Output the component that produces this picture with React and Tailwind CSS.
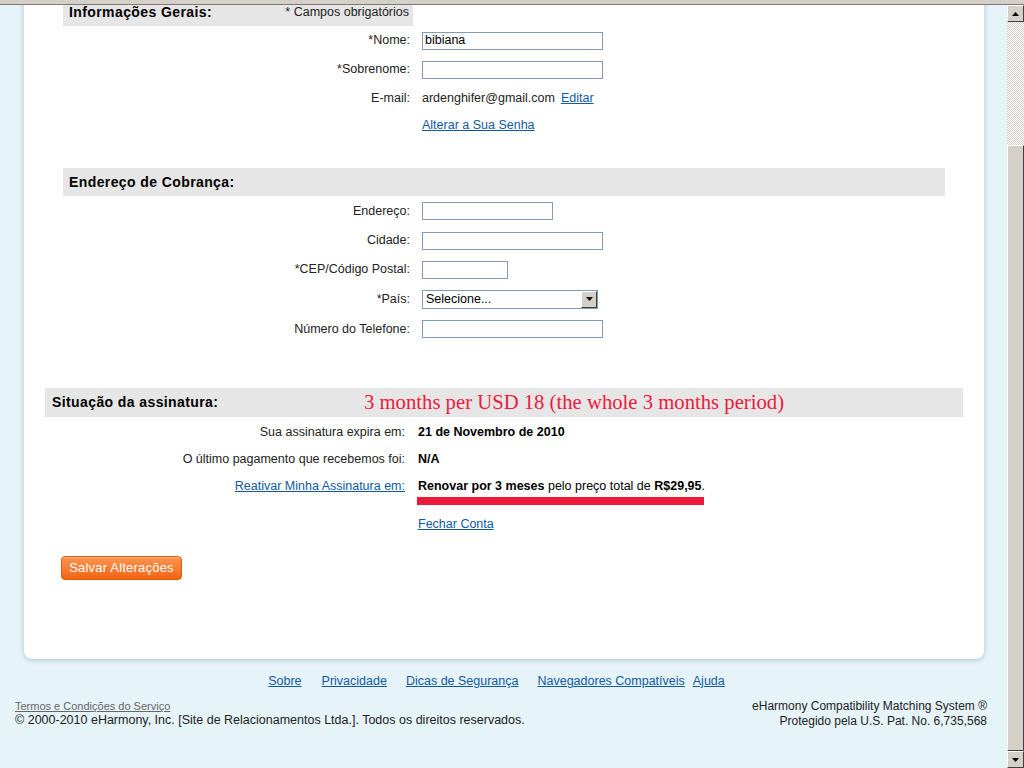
import { useState } from 'react';

const labelCls = 'text-right text-[12.5px] text-[#222]';
const linkCls = 'text-[#0f5aa3] underline';
const inputCls =
  'h-[18px] border border-[#7f9db9] bg-white px-[2px] text-[12.5px] text-black outline-none';

function Row({ label, height, children }) {
  return (
    <div className={`flex items-center ${height}`}>
      <div className={`w-[347px] ${labelCls}`}>{label}</div>
      <div className="ml-[12px] flex items-center text-[12.5px]">{children}</div>
    </div>
  );
}

function StatusRow({ label, height, children, extra }) {
  return (
    <div className={`relative flex items-center ${height}`}>
      <div className={`w-[360px] ${labelCls}`}>{label}</div>
      <div className="relative ml-[13px] flex items-center text-[12.5px] text-black">
        {children}
        {extra}
      </div>
    </div>
  );
}

function SelectBox({ value }) {
  return (
    <div className="flex h-[19px] w-[176px] items-center justify-between border border-[#7f9db9] bg-white pl-[3px] text-[12.5px] text-black">
      <span>{value}</span>
      <span className="flex h-[17px] w-[16px] items-center justify-center border border-t-white border-l-white border-r-[#404040] border-b-[#404040] bg-[#d4d0c8]">
        <svg width="7" height="4" viewBox="0 0 7 4">
          <path d="M0 0h7L3.5 4z" fill="#000" />
        </svg>
      </span>
    </div>
  );
}

function ScrollButton({ dir }) {
  return (
    <div className="flex h-[17px] w-[17px] shrink-0 items-center justify-center border border-t-white border-l-white border-r-[#404040] border-b-[#404040] bg-[#d4d0c8]">
      <svg width="7" height="4" viewBox="0 0 7 4">
        <path d={dir === 'up' ? 'M0 4h7L3.5 0z' : 'M0 0h7L3.5 4z'} fill="#000" />
      </svg>
    </div>
  );
}

function Scrollbar() {
  return (
    <div className="flex w-[17px] shrink-0 flex-col">
      <ScrollButton dir="up" />
      <div className="h-[123px] bg-[image:repeating-conic-gradient(#d4d0c8_0%_25%,#ffffff_0%_50%)] bg-[length:2px_2px]" />
      <div className="flex-1 border border-t-white border-l-white border-r-[#404040] border-b-[#404040] bg-[#d4d0c8]" />
      <ScrollButton dir="down" />
    </div>
  );
}

export default function App() {
  const [nome, setNome] = useState('bibiana');

  return (
    <div className="flex h-[768px] w-[1024px] flex-col overflow-hidden bg-[#e6f3f9] font-['Liberation_Sans',Arial,sans-serif]">
      <div className="h-[5px] shrink-0 border-b border-[#7a7a7a] bg-[#d4d0c8]" />

      <div className="flex min-h-0 flex-1">
        <div className="flex min-w-0 flex-1 flex-col overflow-hidden">
          {/* main card */}
          <div className="ml-[24px] mr-[23px] -mt-[7px] rounded-b-[8px] bg-white pb-[79px] shadow-[0_1px_5px_rgba(60,110,140,0.35)]">
            {/* general info */}
            <div className="mx-[39px]">
              <div className="flex h-[28px] w-[350px] items-center justify-between bg-[#e6e6e6] pl-[6px] pr-[4px]">
                <span className="text-[14px] font-bold tracking-[0.4px] text-black">Informações Gerais:</span>
                <span className="text-[12.5px] text-[#222]">* Campos obrigatórios</span>
              </div>
              <Row label="*Nome:" height="h-[29px]">
                <input className={`${inputCls} w-[181px]`} value={nome} onChange={(e) => setNome(e.target.value)} />
              </Row>
              <Row label="*Sobrenome:" height="h-[29px]">
                <input className={`${inputCls} w-[181px]`} defaultValue="" />
              </Row>
              <Row label="E-mail:" height="h-[28px]">
                <span className="text-[#222]">ardenghifer@gmail.com</span>
                <a href="#" className={`ml-[6px] ${linkCls}`}>Editar</a>
              </Row>
              <Row label="" height="h-[27px]">
                <a href="#" className={linkCls}>Alterar a Sua Senha</a>
              </Row>
            </div>

            {/* billing address */}
            <div className="mx-[39px] mt-[29px]">
              <div className="flex h-[28px] items-center bg-[#e6e6e6] pl-[6px]">
                <span className="text-[14px] font-bold tracking-[0.4px] text-black">Endereço de Cobrança:</span>
              </div>
              <Row label="Endereço:" height="h-[30px]">
                <input className={`${inputCls} w-[131px]`} />
              </Row>
              <Row label="Cidade:" height="h-[29px]">
                <input className={`${inputCls} w-[181px]`} />
              </Row>
              <Row label="*CEP/Código Postal:" height="h-[29px]">
                <input className={`${inputCls} w-[86px]`} />
              </Row>
              <Row label="*País:" height="h-[30px]">
                <SelectBox value="Selecione..." />
              </Row>
              <Row label="Número do Telefone:" height="h-[30px]">
                <input className={`${inputCls} w-[181px]`} />
              </Row>
            </div>

            {/* subscription */}
            <div className="mx-[21px] mt-[44px]">
              <div className="flex h-[29px] items-center bg-[#e6e6e6] pl-[7px]">
                <span className="w-[312px] text-[14px] font-bold tracking-[0.4px] text-black">Situação da assinatura:</span>
                <span className="font-['Liberation_Serif','Times_New_Roman',serif] text-[20.7px] leading-none text-[#ea1a3e]">
                  3 months per USD 18 (the whole 3 months period)
                </span>
              </div>
              <div className="h-[2px]" />
              <StatusRow label="Sua assinatura expira em:" height="h-[27px]">
                <b>21 de Novembro de 2010</b>
              </StatusRow>
              <StatusRow label="O último pagamento que recebemos foi:" height="h-[27px]">
                <b>N/A</b>
              </StatusRow>
              <StatusRow
                label={<a href="#" className={linkCls}>Reativar Minha Assinatura em:</a>}
                height="h-[27px]"
                extra={<span className="absolute left-[-1px] top-[20px] h-[8px] w-[287px] bg-[#ec1a38]" />}
              >
                <span>
                  <b>Renovar por 3 meses</b> pelo preço total de <b>R$29,95</b>.
                </span>
              </StatusRow>
              <div className="mt-[11px]">
                <StatusRow label="" height="h-[27px]">
                  <a href="#" className={linkCls}>Fechar Conta</a>
                </StatusRow>
              </div>
            </div>

            <div className="ml-[37px] mt-[17px]">
              <button
                type="button"
                className="h-[24px] w-[121px] rounded-[4px] border border-[#e05a08] bg-linear-to-b from-[#ff9550] to-[#f2640a] text-[13px] tracking-[0.2px] text-white shadow-[inset_0_1px_0_rgba(255,255,255,0.35)]"
              >
                Salvar Alterações
              </button>
            </div>
          </div>

          {/* footer */}
          <div className="mt-[15px] flex h-[16px] items-center justify-center pr-[14px] text-[12.5px]">
            <a href="#" className={linkCls}>Sobre</a>
            <a href="#" className={`ml-[20px] ${linkCls}`}>Privacidade</a>
            <a href="#" className={`ml-[19px] ${linkCls}`}>Dicas de Segurança</a>
            <a href="#" className={`ml-[19px] ${linkCls}`}>Navegadores Compatíveis</a>
            <a href="#" className={`ml-[8px] ${linkCls}`}>Ajuda</a>
          </div>

          <div className="mt-[9px] flex justify-between pl-[15px] pr-[20px]">
            <div className="flex flex-col">
              <a href="#" className="h-[14px] text-[11px] leading-[14px] text-[#666] underline">
                Termos e Condições do Serviço
              </a>
              <span className="h-[14px] text-[12.5px] leading-[14px] text-[#222]">
                © 2000-2010 eHarmony, Inc. [Site de Relacionamentos Ltda.]. Todos os direitos reservados.
              </span>
            </div>
            <div className="flex flex-col items-end text-[12px] leading-[15px] text-[#222]">
              <span>eHarmony Compatibility Matching System ®</span>
              <span>Protegido pela U.S. Pat. No. 6,735,568</span>
            </div>
          </div>
        </div>

        <Scrollbar />
      </div>
    </div>
  );
}
